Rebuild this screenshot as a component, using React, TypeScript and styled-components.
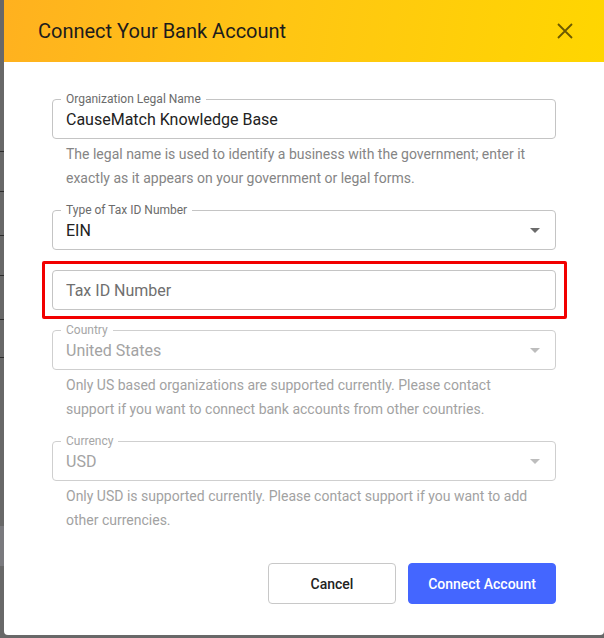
import React from "react";
import styled, { createGlobalStyle } from "styled-components";

const GlobalStyle = createGlobalStyle`
  html, body { margin: 0; padding: 0; }
  body {
    background: #686868;
    font-family: Roboto, "Liberation Sans", Arial, sans-serif;
    -webkit-font-smoothing: antialiased;
  }
  * { box-sizing: border-box; }
`;

const Screen = styled.div`
  display: flex;
  width: 604px;
  height: 638px;
  overflow: hidden;
  background: #686868;
`;

const PageEdge = styled.div`
  width: 4px;
  flex-shrink: 0;
  display: flex;
  flex-direction: column;
`;

const EdgeRow = styled.div<{ $h: number; $line?: boolean; $light?: boolean }>`
  height: ${(p) => p.$h}px;
  flex-shrink: 0;
  background: ${(p) => (p.$light ? "#7a7a7e" : "transparent")};
  border-bottom: ${(p) => (p.$line ? "1px solid #2c2c2c" : "none")};
`;

const Dialog = styled.div`
  flex: 1;
  align-self: flex-start;
  background: #fff;
  display: flex;
  flex-direction: column;
  border-bottom-left-radius: 4px;
  border-bottom-right-radius: 4px;
`;

const Header = styled.div`
  height: 62px;
  flex-shrink: 0;
  display: flex;
  align-items: center;
  justify-content: space-between;
  padding: 0 31px 0 34px;
  background: linear-gradient(100deg, #ffb11f 0%, #ffc514 45%, #ffd600 100%);
`;

const Title = styled.h2`
  margin: 0;
  font-size: 20px;
  font-weight: 400;
  color: #1c1c1c;
  letter-spacing: 0;
`;

const CloseButton = styled.button`
  border: none;
  background: transparent;
  padding: 0;
  width: 16px;
  height: 16px;
  display: flex;
  align-items: center;
  justify-content: center;
  color: rgba(0, 0, 0, 0.58);
  cursor: pointer;
`;

const Body = styled.div`
  padding: 37px 48px 31px;
  display: flex;
  flex-direction: column;
`;

const Form = styled.div`
  display: flex;
  flex-direction: column;
  gap: 20px;
`;

const Group = styled.div`
  position: relative;
  display: flex;
  flex-direction: column;
`;

const Outline = styled.div<{ $disabled?: boolean }>`
  position: relative;
  height: 40px;
  border: 1px solid ${(p) => (p.$disabled ? "#cfcfcf" : "#c4c4c4")};
  border-radius: 4px;
  display: flex;
  align-items: center;
`;

const FloatLabel = styled.span<{ $disabled?: boolean }>`
  position: absolute;
  left: 8px;
  top: -9px;
  padding: 0 5px;
  background: #fff;
  font-size: 12px;
  line-height: 16px;
  color: ${(p) => (p.$disabled ? "#a6a6a6" : "#6b6b6b")};
`;

const Input = styled.input`
  flex: 1;
  height: 100%;
  border: none;
  outline: none;
  background: transparent;
  padding: 0 13px;
  font-family: inherit;
  font-size: 16px;
  color: #222;
  &::placeholder {
    color: #6f6f6f;
    opacity: 1;
  }
`;

const SelectValue = styled.span<{ $disabled?: boolean }>`
  flex: 1;
  padding: 0 13px;
  font-size: 16px;
  color: ${(p) => (p.$disabled ? "#a3a3a3" : "#222")};
`;

const Arrow = styled.svg`
  margin-right: 15px;
`;

const Helper = styled.p<{ $disabled?: boolean }>`
  margin: 3px 14px 0;
  font-size: 14px;
  line-height: 24px;
  color: ${(p) => (p.$disabled ? "#a2a2a2" : "#858585")};
`;

const Highlight = styled.div`
  position: absolute;
  left: -10px;
  right: -11px;
  top: -9px;
  bottom: -9px;
  border: 3px solid #f20000;
  border-radius: 2px;
  pointer-events: none;
`;

const Footer = styled.div`
  margin-top: 31px;
  display: flex;
  justify-content: flex-end;
  gap: 12px;
`;

const Button = styled.button<{ $primary?: boolean }>`
  height: 41px;
  padding: 0;
  width: ${(p) => (p.$primary ? 148 : 128)}px;
  border-radius: 4px;
  font-family: inherit;
  font-size: 14px;
  font-weight: 500;
  cursor: pointer;
  border: 1px solid ${(p) => (p.$primary ? "#4466ff" : "#c8c8c8")};
  background: ${(p) => (p.$primary ? "#4466ff" : "#fff")};
  color: ${(p) => (p.$primary ? "#fff" : "#222")};
`;

const DropArrow = ({ disabled }: { disabled?: boolean }) => (
  <Arrow width="10" height="5" viewBox="0 0 10 5">
    <path d="M0 0 L10 0 L5 5 Z" fill={disabled ? "#bdbdbd" : "#6b6b6b"} />
  </Arrow>
);

const edgeRows = [
  { h: 152, line: true },
  { h: 40, line: true },
  { h: 44, line: true },
  { h: 40, line: true },
  { h: 44, line: true },
  { h: 38, line: true },
  { h: 168 },
  { h: 40, light: true },
  { h: 72 },
];

export default function App() {
  return (
    <>
      <GlobalStyle />
      <Screen>
        <PageEdge>
          {edgeRows.map((r, i) => (
            <EdgeRow key={i} $h={r.h} $line={r.line} $light={r.light} />
          ))}
        </PageEdge>
        <Dialog>
          <Header>
            <Title>Connect Your Bank Account</Title>
            <CloseButton aria-label="Close">
              <svg width="16" height="16" viewBox="0 0 16 16">
                <path d="M1 1 L15 15 M15 1 L1 15" stroke="currentColor" strokeWidth="1.8" />
              </svg>
            </CloseButton>
          </Header>
          <Body>
            <Form>
              <Group>
                <Outline>
                  <FloatLabel>Organization Legal Name</FloatLabel>
                  <Input defaultValue="CauseMatch Knowledge Base" />
                </Outline>
                <Helper>
                  The legal name is used to identify a business with the government; enter it
                  exactly as it appears on your government or legal forms.
                </Helper>
              </Group>
              <Group>
                <Outline>
                  <FloatLabel>Type of Tax ID Number</FloatLabel>
                  <SelectValue>EIN</SelectValue>
                  <DropArrow />
                </Outline>
              </Group>
              <Group>
                <Outline>
                  <Input placeholder="Tax ID Number" />
                </Outline>
                <Highlight />
              </Group>
              <Group>
                <Outline $disabled>
                  <FloatLabel $disabled>Country</FloatLabel>
                  <SelectValue $disabled>United States</SelectValue>
                  <DropArrow disabled />
                </Outline>
                <Helper $disabled>
                  Only US based organizations are supported currently. Please contact support
                  if you want to connect bank accounts from other countries.
                </Helper>
              </Group>
              <Group>
                <Outline $disabled>
                  <FloatLabel $disabled>Currency</FloatLabel>
                  <SelectValue $disabled>USD</SelectValue>
                  <DropArrow disabled />
                </Outline>
                <Helper $disabled>
                  Only USD is supported currently. Please contact support if you want to add
                  other currencies.
                </Helper>
              </Group>
            </Form>
            <Footer>
              <Button>Cancel</Button>
              <Button $primary>Connect Account</Button>
            </Footer>
          </Body>
        </Dialog>
      </Screen>
    </>
  );
}
